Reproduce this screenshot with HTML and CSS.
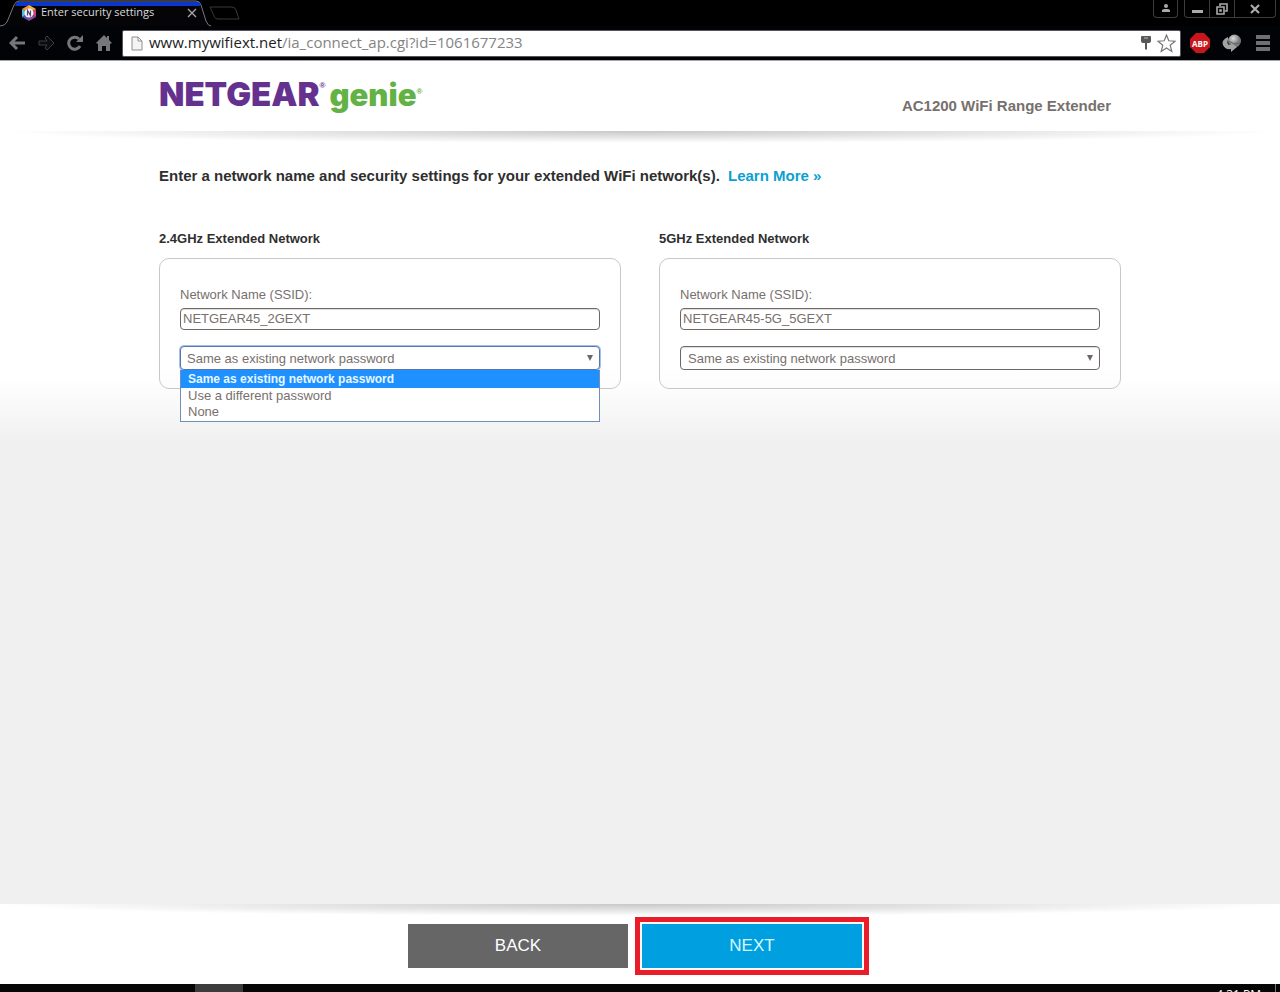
FILE: index.html
```html
<!DOCTYPE html>
<html lang="en">
<head>
<meta charset="utf-8">
<title>Enter security settings</title>
<link rel="stylesheet" href="styles.css">
</head>
<body>
<div class="browser">
  <div class="tabstrip">
    <svg class="tab-shape" width="244" height="27" viewBox="0 0 244 27" aria-hidden="true">
      <path d="M0 26q5 0 7-4L14 5q2-4 5-4h177q4 0 5 4l5 16q2 5 5 5" fill="#050507" stroke="#77777f"/>
      <path d="M17 2h182l2 4H15z" fill="#0a36cc"/>
      <path d="M210 7h22q3 0 4 3l3 9h-21q-3 0-4-3z" fill="none" stroke="#38383b"/>
    </svg>
    <div class="tab">
      <svg width="16" height="16" viewBox="0 0 16 16" aria-hidden="true">
        <path d="M8 0l7 4-7 4z" fill="#f0b638"/><path d="M15 4v8L8 8z" fill="#c74483"/>
        <path d="M15 12l-7 4V8z" fill="#9144a3"/><path d="M8 16l-7-4 7-4z" fill="#5553ac"/>
        <path d="M1 12V4l7 4z" fill="#53b9e2"/><path d="M1 4l7-4v8z" fill="#f3943c"/>
        <circle cx="8" cy="8" r="4.500" fill="#f6f4fa"/>
        <path d="M6.500 10.500v-5l3 5v-5" fill="none" stroke="#50466a" stroke-width="1.200"/>
      </svg>
      <span class="tab-title">Enter security settings</span>
      <button class="plain" aria-label="Close tab"><svg width="10" height="10" viewBox="0 0 10 10"><path d="M1 1l8 8M9 1L1 9" stroke="#a5a5a8" stroke-width="1.4"/></svg></button>
    </div>
    <div class="window-controls">
      <button class="winbtn user" aria-label="User"><svg width="10" height="9" viewBox="0 0 10 9"><circle cx="5" cy="2" r="2" fill="#aaa"/><path d="M1 8V6l2-1h4l2 1v2z" fill="#aaa"/></svg></button>
      <div class="wingroup">
        <button class="winbtn" aria-label="Minimize"><svg width="11" height="10" viewBox="0 0 11 10"><path d="M0 6h11v3H0z" fill="#aaa"/></svg></button>
        <button class="winbtn" aria-label="Restore"><svg width="12" height="12" viewBox="0 0 12 12"><path d="M4 3V1h7v7H9M1 4h7v7H1zM4 7h1v1H4z" fill="none" stroke="#aaa" stroke-width="1.6"/></svg></button>
        <button class="winbtn wide" aria-label="Close"><svg width="10" height="10" viewBox="0 0 10 10"><path d="M1 1l8 8M9 1L1 9" stroke="#aaa" stroke-width="2.2"/></svg></button>
      </div>
    </div>
  </div>
  <div class="toolbar">
    <button class="plain" aria-label="Back"><svg width="17" height="16" viewBox="0 0 17 16"><path d="M16 8H3M8 2L2 8l6 6" fill="none" stroke="#77777a" stroke-width="3"/></svg></button>
    <button class="plain" aria-label="Forward"><svg width="17" height="16" viewBox="0 0 17 16"><path d="M1 6h8L7 3l2-2 7 7-7 7-2-2 2-3H1z" fill="#0b0c10" stroke="#3d3e42"/></svg></button>
    <button class="plain" aria-label="Reload"><svg width="17" height="16" viewBox="0 0 17 16"><path d="M13 11a6 6 0 1 1-1-7" fill="none" stroke="#77777a" stroke-width="3"/><path d="M16 0v7H9z" fill="#77777a"/></svg></button>
    <button class="plain" aria-label="Home"><svg width="17" height="16" viewBox="0 0 17 16"><path d="M8 0L0 8l2 1v7h4v-5h4v5h4V9l2-1-3-3V1h-2v2z" fill="#77777a"/></svg></button>
    <div class="address">
      <svg width="12" height="15" viewBox="0 0 12 15" aria-hidden="true"><path d="M1 1h6l4 4v9H1zM7 1v4h4" fill="#f4f4f4" stroke="#8f8f8f"/></svg>
      <span class="url">www.mywifiext.net<span class="path">/ia_connect_ap.cgi?id=1061677233</span></span>
      <svg width="10" height="14" viewBox="0 0 10 14" aria-hidden="true"><path d="M0 1q0-1 1-1h8q1 0 1 1v4q0 2-2 2H6v6l-1 1-1-1V7H2Q0 7 0 5z" fill="#58585a"/><path d="M3 2h4" stroke="#bbb"/></svg>
      <button class="plain" aria-label="Bookmark"><svg width="19" height="19" viewBox="0 0 19 19"><path d="M9.500 1l2.300 5.800 6.200.4-4.800 4 1.600 6.300-5.300-3.500-5.300 3.500 1.600-6.300-4.800-4 6.200-.4z" fill="#fff" stroke="#77777a" stroke-width="1.200"/></svg></button>
    </div>
    <button class="plain" aria-label="Adblock Plus"><svg width="20" height="20" viewBox="0 0 20 20"><path d="M6 0h8l6 6v8l-6 6H6l-6-6V6z" fill="#c9151c"/><text x="10" y="14" text-anchor="middle" class="abp-text">ABP</text></svg></button>
    <button class="plain" aria-label="Extension"><svg width="20" height="18" viewBox="0 0 20 18"><defs><radialGradient id="ball" cx=".4" cy=".3"><stop offset="0" stop-color="#ddd"/><stop offset="1" stop-color="#777"/></radialGradient></defs><circle cx="12.500" cy="7" r="6.500" fill="url(#ball)"/><path d="M6 3Q-1 6 1 11q2 5 8 4v3l6-5-6-4v2Q4 11 6 6z" fill="#a2a2a2"/><path d="M6 7q5 4 12 2" fill="none" stroke="#666"/></svg></button>
    <button class="plain menu" aria-label="Menu"><svg width="14" height="16" viewBox="0 0 14 16"><path d="M0 0h14v4H0zM0 6h14v4H0zM0 12h14v4H0z" fill="#707073"/></svg></button>
  </div>
</div>

<header class="site-header">
  <div class="container header-row">
    <div class="logo"><span class="brand">NETGEAR</span><span class="reg">®</span><span class="genie">genie</span><span class="reg reg-green">®</span></div>
    <div class="model">AC1200 WiFi Range Extender</div>
  </div>
</header>

<main class="content">
  <div class="container">
    <h1 class="intro">Enter a network name and security settings for your extended WiFi network(s). <a href="#">Learn More »</a></h1>
    <form class="networks">
      <section>
        <h2>2.4GHz Extended Network</h2>
        <div class="card">
          <label for="ssid2">Network Name (SSID):</label>
          <input id="ssid2" type="text" value="NETGEAR45_2GEXT">
          <div class="dropdown">
            <select class="focused" aria-label="2.4GHz password">
              <option>Same as existing network password</option><option>Use a different password</option><option>None</option>
            </select>
            <ul class="options" role="listbox">
              <li class="selected" role="option" aria-selected="true">Same as existing network password</li>
              <li role="option">Use a different password</li>
              <li role="option">None</li>
            </ul>
          </div>
        </div>
      </section>
      <section>
        <h2>5GHz Extended Network</h2>
        <div class="card">
          <label for="ssid5">Network Name (SSID):</label>
          <input id="ssid5" type="text" value="NETGEAR45-5G_5GEXT">
          <div class="dropdown">
            <select aria-label="5GHz password">
              <option>Same as existing network password</option><option>Use a different password</option><option>None</option>
            </select>
          </div>
        </div>
      </section>
    </form>
  </div>
</main>

<footer class="actions">
  <button class="action back">BACK</button>
  <div class="highlight"><button class="action next">NEXT</button></div>
</footer>
<div class="taskbar"><div class="task"></div><span class="clock">4:31 PM</span></div>
</body>
</html>
```
FILE: styles.css
```css
* { box-sizing: border-box; }
body {
  margin: 0;
  min-height: 100vh;
  display: flex;
  flex-direction: column;
  font-family: "Liberation Sans", Arial, sans-serif;
  font-size: 13px;
  color: #77706d;
  background: #fff;
}
button, input, select { font: inherit; color: inherit; }
.plain { display: flex; padding: 0; border: 0; background: none; }

.browser { background: #020306; border-bottom: 1px solid #a5a5ab; }
.tabstrip {
  position: relative;
  display: flex;
  justify-content: space-between;
  height: 26px;
  background: #000;
}
.tab-shape { position: absolute; left: 0; top: 0; }
.tab {
  position: relative;
  display: flex;
  align-items: center;
  width: 197px;
  padding-left: 21px;
  gap: 4px;
}
.tab-title {
  flex: 1;
  font: 11px/16px "Open Sans", "Noto Sans", sans-serif;
  padding-bottom: 2px;
  color: #d8d8da;
  white-space: nowrap;
}
.window-controls { display: flex; gap: 6px; height: 18px; padding-right: 4px; }
.winbtn {
  display: flex;
  align-items: center;
  justify-content: center;
  width: 25px;
  padding: 0;
  border: 0;
  border-right: 1px solid #3c3c3f;
  background: none;
}
.winbtn.user { border: 1px solid #3c3c3f; border-top: 0; border-radius: 0 0 4px 4px; }
.wingroup { display: flex; border: 1px solid #3c3c3f; border-width: 0 1px 1px; border-radius: 0 0 4px 4px; }
.winbtn.wide { width: 40px; border: 0; }
.toolbar {
  display: flex;
  align-items: center;
  gap: 12px;
  height: 34px;
  padding: 0 10px 0 9px;
}
.address {
  flex: 1;
  display: flex;
  align-items: center;
  gap: 6px;
  height: 27px;
  margin-left: -3px;
  margin-right: -3px;
  padding: 0 4px 0 8px;
  border: 1px solid #55565a;
  border-radius: 2px;
  background: #fff;
}
.url { flex: 1; font: 15px/20px "Open Sans", "Noto Sans", sans-serif; color: #222; padding-bottom: 2px; }
.path { color: #848484; }
.abp-text { font: bold 8px "Open Sans", sans-serif; fill: #fff; }
.menu { margin-left: 2px; }

.container { width: 100%; max-width: 962px; margin: 0 auto; }
.site-header { height: 70px; }
.header-row { display: flex; justify-content: space-between; padding-right: 10px; }
.logo { display: flex; align-items: baseline; padding-top: 13px; font: 900 33px/40px Inter, sans-serif; }
.brand { color: #65318f; }
.genie { color: #62b246; font-size: 31px; }
.reg { align-self: flex-start; font: bold 8px/24px "Liberation Sans", sans-serif; color: #65318f; margin-right: 4px; }
.reg-green { color: #62b246; line-height: 36px; }
.model { padding-top: 36px; font-size: 15px; line-height: 18px; font-weight: bold; }

.content {
  flex: 1;
  background:
    radial-gradient(ellipse 50% 12px at 50% 0, #c8c8c8, rgba(255, 255, 255, 0)) no-repeat,
    linear-gradient(#fff 248px, #f0f0f0 310px);
}
.intro { margin: 0; padding-top: 35px; font-size: 15px; line-height: 20px; color: #2f2f2f; }
.intro a { margin-left: 4px; color: #0c9fd3; text-decoration: none; }
.networks { display: grid; grid-template-columns: 1fr 1fr; gap: 38px; padding-top: 44px; }
h2 { margin: 0 0 11px; font-size: 13px; line-height: 17px; color: #2f2f2f; }
.card { padding: 27px 20px 18px; border: 1px solid #c8c8c8; border-radius: 10px; background: linear-gradient(#fff 80%, #fcfcfc); }
.card label { display: block; line-height: 18px; margin-bottom: 4px; }
.card input, select {
  display: block;
  width: 100%;
  border: 1px solid #6e6865;
  border-radius: 4px;
  background: #fff;
  box-shadow: inset 0 1px 1px #ddd;
}
.card input { height: 22px; padding: 0 2px 2px; }
.dropdown { position: relative; margin-top: 16px; }
.dropdown::after {
  content: "";
  position: absolute;
  right: 7px;
  top: 9px;
  border: solid transparent;
  border-width: 6px 3px 0;
  border-top-color: #6e6865;
}
select { height: 24px; padding: 0 7px; appearance: none; }
select.focused { padding-left: 6px; border-color: #5376b5; box-shadow: 0 0 0 1px #a9c0e6; }
.options {
  position: absolute;
  left: 0;
  right: 0;
  top: 24px;
  margin: 0;
  padding: 0 0 1px;
  list-style: none;
  border: 1px solid #6d8fb9;
  border-top-color: #1e90ff;
  background: #fff;
}
.options li { padding: 0 7px; line-height: 16px; }
.options .selected { padding-bottom: 1px; background: #1e90ff; color: #e8f8ff; font-size: 12px; font-weight: bold; }

.actions {
  display: flex;
  justify-content: center;
  align-items: center;
  gap: 7px;
  height: 80px;
  padding: 4px 3px 0 0;
  background: radial-gradient(ellipse 50% 12px at 50% 0, #c8c8c8, rgba(255, 255, 255, 0)) no-repeat, #fff;
}
.action { width: 220px; height: 44px; border: 0; font-size: 17px; color: #fff; }
.back { background: #666; }
.next { display: block; background: #00a0e0; color: #d8f8ff; }
.highlight { padding: 2px; border: 5px solid #ea1c27; }
.taskbar { display: flex; justify-content: space-between; height: 8px; padding-left: 195px; padding-right: 4px; overflow: hidden; background: #060606; }
.task { width: 48px; background: #3c3c3c; }
.clock { padding: 3px 14px 0 0; height: 24px; border-right: 1px solid #777; font: 12px/16px "Open Sans", sans-serif; color: #fff; }
```
